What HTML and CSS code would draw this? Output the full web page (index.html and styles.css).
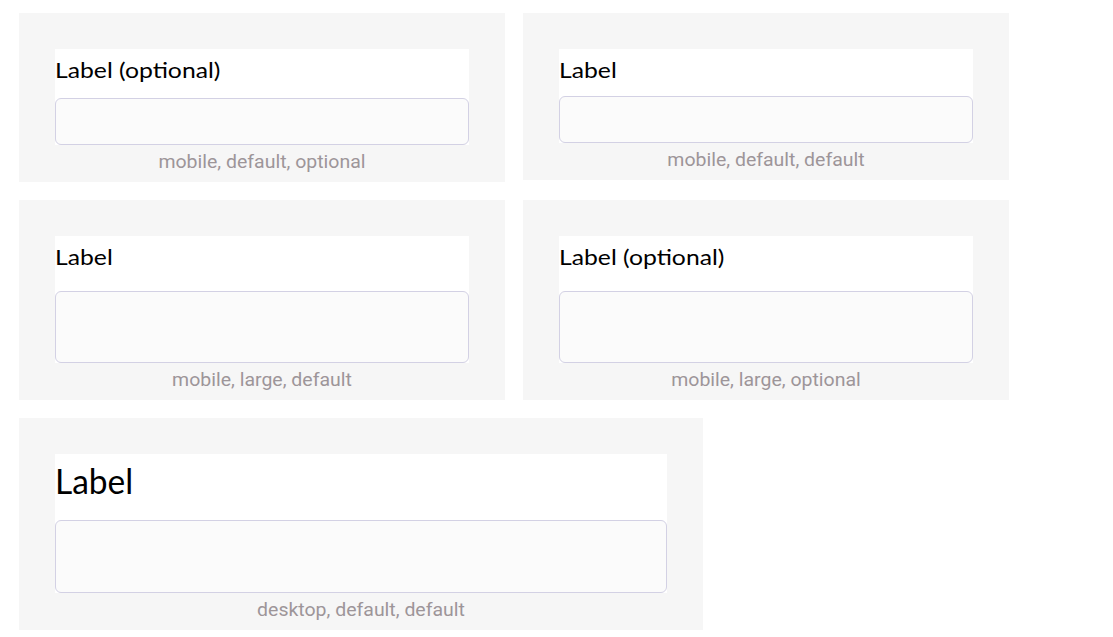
FILE: index.html
```html
<!DOCTYPE html>
<html lang="en">
<head>
<meta charset="utf-8">
<title>Text field variants</title>
<link rel="stylesheet" href="styles.css">
</head>
<body>
<main class="board">
  <section class="card card--half">
    <div class="field field--default field--tall">
      <label class="field__label">Label (optional)</label>
      <div class="field__input"></div>
    </div>
    <p class="card__caption">mobile, default, optional</p>
  </section>
  <section class="card card--half">
    <div class="field field--default">
      <label class="field__label">Label</label>
      <div class="field__input"></div>
    </div>
    <p class="card__caption">mobile, default, default</p>
  </section>
  <section class="card card--half">
    <div class="field field--large">
      <label class="field__label">Label</label>
      <div class="field__input"></div>
    </div>
    <p class="card__caption">mobile, large, default</p>
  </section>
  <section class="card card--half">
    <div class="field field--large">
      <label class="field__label">Label (optional)</label>
      <div class="field__input"></div>
    </div>
    <p class="card__caption">mobile, large, optional</p>
  </section>
  <section class="card card--wide">
    <div class="field field--desktop">
      <label class="field__label">Label</label>
      <div class="field__input"></div>
    </div>
    <p class="card__caption">desktop, default, default</p>
  </section>
</main>
</body>
</html>
```
FILE: styles.css
```css
html, body {
  margin: 0;
  background: #ffffff;
}

body {
  padding: 13px 0 0 19px;
  font-family: "Lato", "Liberation Sans", sans-serif;
}

.board {
  display: grid;
  grid-template-columns: 486px 486px;
  column-gap: 18px;
  row-gap: 18px;
  align-items: start;
}

.card {
  background: #f6f6f6;
  padding: 36px 36px 10px;
  box-sizing: border-box;
}

.card--wide {
  width: 684px;
  grid-column: 1 / span 2;
}

.field {
  background: #ffffff;
  display: flex;
  flex-direction: column;
}

.field__label {
  display: block;
  font-family: "Lato", sans-serif;
  font-size: 22px;
  line-height: 25px;
  color: #000000;
  padding-top: 8px;
  transform: scaleX(1.124);
  transform-origin: left center;
  white-space: nowrap;
}

.field__input {
  box-sizing: border-box;
  border: 1px solid #d3d1e4;
  border-radius: 6px;
  background: #fbfbfb;
}

.field--default .field__label { margin-bottom: 14px; }
.field--default .field__input { height: 47px; }
.field--tall .field__label { margin-bottom: 15.5px; }
.field--tall .field__input { height: 47.5px; }

.field--large .field__label { margin-bottom: 22px; }
.field--large .field__input { height: 72px; }

.field--desktop .field__label {
  font-size: 35px;
  line-height: 42px;
  padding-top: 5px;
  margin-bottom: 19px;
  transform: scaleX(0.957);
}
.field--desktop .field__input { height: 73px; }

.card__caption {
  margin: 7px 0 0;
  font-family: "Roboto", sans-serif;
  font-size: 18px;
  line-height: 20px;
  color: #9d9599;
  text-align: center;
  transform: scaleX(1.082);
}
```
